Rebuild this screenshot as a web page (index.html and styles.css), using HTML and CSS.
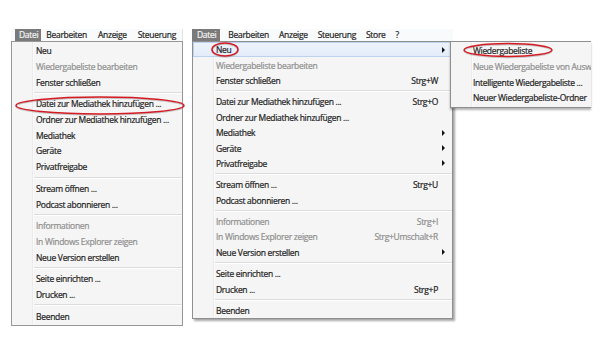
FILE: index.html
```html
<!DOCTYPE html>
<html lang="de">
<head>
    <meta charset="UTF-8">
    <meta name="viewport" content="width=device-width, initial-scale=1.0">
    <title>iTunes Datei-Menü</title>
    <link rel="stylesheet" href="styles.css">
</head>
<body>
    <div class="stage">
        <!-- Left screenshot: short menu -->
        <div class="shot left">
            <div class="menubar">
                <span class="bar-item active">Datei</span>
                <span class="bar-item">Bearbeiten</span>
                <span class="bar-item">Anzeige</span>
                <span class="bar-item">Steuerung</span>
            </div>
            <div class="menu">
                <div class="item">Neu</div>
                <div class="item disabled">Wiedergabeliste bearbeiten</div>
                <div class="item">Fenster schließen</div>
                <div class="sep"></div>
                <div class="item">Datei zur Mediathek hinzufügen ...</div>
                <div class="item">Ordner zur Mediathek hinzufügen ...</div>
                <div class="item">Mediathek</div>
                <div class="item">Geräte</div>
                <div class="item">Privatfreigabe</div>
                <div class="sep"></div>
                <div class="item">Stream öffnen ...</div>
                <div class="item">Podcast abonnieren ...</div>
                <div class="sep"></div>
                <div class="item disabled">Informationen</div>
                <div class="item disabled">In Windows Explorer zeigen</div>
                <div class="item">Neue Version erstellen</div>
                <div class="sep"></div>
                <div class="item">Seite einrichten ...</div>
                <div class="item">Drucken ...</div>
                <div class="sep"></div>
                <div class="item">Beenden</div>
            </div>
        </div>

        <!-- Right screenshot: full menu with submenu -->
        <div class="shot right">
            <div class="menubar">
                <span class="bar-item active">Datei</span>
                <span class="bar-item">Bearbeiten</span>
                <span class="bar-item">Anzeige</span>
                <span class="bar-item">Steuerung</span>
                <span class="bar-item">Store</span>
                <span class="bar-item">?</span>
            </div>
            <div class="menu">
                <div class="item hover"><span class="label">Neu</span><span class="key"></span><span class="sub"></span></div>
                <div class="item disabled"><span class="label">Wiedergabeliste bearbeiten</span><span class="key"></span><span class="none"></span></div>
                <div class="item"><span class="label">Fenster schließen</span><span class="key">Strg+W</span><span class="none"></span></div>
                <div class="sep"></div>
                <div class="item"><span class="label">Datei zur Mediathek hinzufügen ...</span><span class="key">Strg+O</span><span class="none"></span></div>
                <div class="item"><span class="label">Ordner zur Mediathek hinzufügen ...</span><span class="key"></span><span class="none"></span></div>
                <div class="item"><span class="label">Mediathek</span><span class="key"></span><span class="sub"></span></div>
                <div class="item"><span class="label">Geräte</span><span class="key"></span><span class="sub"></span></div>
                <div class="item"><span class="label">Privatfreigabe</span><span class="key"></span><span class="sub"></span></div>
                <div class="sep"></div>
                <div class="item"><span class="label">Stream öffnen ...</span><span class="key">Strg+U</span><span class="none"></span></div>
                <div class="item"><span class="label">Podcast abonnieren ...</span><span class="key"></span><span class="none"></span></div>
                <div class="sep"></div>
                <div class="item disabled"><span class="label">Informationen</span><span class="key">Strg+I</span><span class="none"></span></div>
                <div class="item disabled"><span class="label">In Windows Explorer zeigen</span><span class="key">Strg+Umschalt+R</span><span class="none"></span></div>
                <div class="item"><span class="label">Neue Version erstellen</span><span class="key"></span><span class="sub"></span></div>
                <div class="sep"></div>
                <div class="item"><span class="label">Seite einrichten ...</span><span class="key"></span><span class="none"></span></div>
                <div class="item"><span class="label">Drucken ...</span><span class="key">Strg+P</span><span class="none"></span></div>
                <div class="sep"></div>
                <div class="item"><span class="label">Beenden</span><span class="key"></span><span class="none"></span></div>
            </div>

            <!-- Submenu of "Neu", cropped at the right edge like the original -->
            <div class="submenu">
                <div class="item">Wiedergabeliste</div>
                <div class="item disabled">Neue Wiedergabeliste von Ausw</div>
                <div class="item">Intelligente Wiedergabeliste ...</div>
                <div class="item">Neuer Wiedergabeliste-Ordner</div>
            </div>
        </div>
    </div>

    <!-- Red hand-drawn marks over the screenshots -->
    <svg class="marks" width="600" height="350" viewBox="0 0 600 350">
        <g fill="none" stroke="#9a9a9a" stroke-width="1.4" opacity="0.5">
            <ellipse cx="100" cy="106.5" rx="84" ry="8.5"/>
            <ellipse cx="225" cy="50.5" rx="13" ry="6.5"/>
            <ellipse cx="508" cy="51" rx="44" ry="6.5"/>
        </g>
        <g fill="none" stroke="#d41a22" stroke-width="1.5">
            <ellipse cx="100" cy="105.5" rx="84" ry="8.5"/>
            <ellipse cx="225" cy="49.5" rx="13" ry="6.5"/>
            <ellipse cx="508" cy="50" rx="44" ry="6.5"/>
        </g>
    </svg>
</body>
</html>
```

FILE: styles.css
```css
body {
    margin: 0;
    background: #fff;
    font-family: 'Open Sans', 'Noto Sans', Arial, sans-serif;
    font-size: 8.5px;
    letter-spacing: -0.3px;
    -webkit-text-stroke: 0.2px currentColor;
    color: #1c1c1c;
    width: 600px;
    height: 350px;
    overflow: hidden;
    position: relative;
}

.stage {
    display: flex;
    align-items: flex-start;
    gap: 9px;
    padding: 29px 0 0 11px;
}

.shot {
    position: relative;
}

.shot.left {
    width: 172px;
}

.shot.right {
    width: 261px;
}

/* Menu bar across the top of each shot */
.menubar {
    display: flex;
    height: 12px;
    line-height: 12px;
    background: #f9fafb;
    overflow: hidden;
}

.left .menubar {
    padding-left: 4px;
    border-right: 1px solid #e2e2e2;
}

.bar-item {
    padding: 0 6px 0 5px;
    white-space: nowrap;
}

.right .bar-item {
    padding: 0 5px;
}

.bar-item.active {
    background: #7a7a7a;
    color: #f4f4f4;
    padding: 0 3px 0 4px;
}

.right .bar-item.active {
    padding: 0 4px 0 5px;
    margin-right: 3px;
}

/* Drop down */
.menu {
    background-color: #f5f5f5;
    background-image: linear-gradient(to right, transparent 20px, #ebebeb 20px, #ebebeb 21px, #fafafa 21px, #fafafa 22px, transparent 22px);
    border: 1px solid #979797;
}

.left .menu {
    padding: 1px 0;
}

.right .menu {
    border-color: #8f8f8f;
    box-shadow: 2px 2px 2px rgba(0, 0, 0, 0.35);
}

.item {
    display: flex;
    align-items: center;
    white-space: nowrap;
    position: relative;
}

.left .item {
    height: 15.7px;
    padding-left: 24px;
}

.right .menu .item {
    height: 15.4px;
    padding: 0 7px 0 23px;
}

.label {
    flex: 1;
}

.key {
    text-align: right;
}

.sub, .none {
    width: 3px;
    height: 6px;
    margin-left: 4px;
    box-sizing: border-box;
}

.sub {
    border-left: 3px solid #111;
    border-top: 3px solid transparent;
    border-bottom: 3px solid transparent;
}

.disabled {
    color: #8e8e8e;
}

.item.hover {
    background: linear-gradient(#eef4fc, #e2ecf9);
    box-shadow: inset 0 0 0 1px #bcd3ef;
}

.sep {
    height: 6px;
    margin-left: 22px;
    background: linear-gradient(transparent 2px, #dcdcdc 2px, #dcdcdc 3px, #fff 3px, #fff 4px, transparent 4px);
}

/* Submenu hanging off "Neu" */
.submenu {
    position: absolute;
    top: 12px;
    left: 258px;
    width: 140px;
    overflow: hidden;
    padding: 1px 0 1px 0;
    background-color: #f5f5f5;
    background-image: linear-gradient(to right, transparent 20px, #ebebeb 20px, #ebebeb 21px, #fafafa 21px, #fafafa 22px, transparent 22px);
    border: 1px solid #8f8f8f;
    border-right: none;
    box-shadow: 0 2px 2px rgba(0, 0, 0, 0.3);
}

.submenu .item {
    height: 15.7px;
    padding-left: 22px;
}

.marks {
    position: absolute;
    top: 0;
    left: 0;
    pointer-events: none;
}
```
